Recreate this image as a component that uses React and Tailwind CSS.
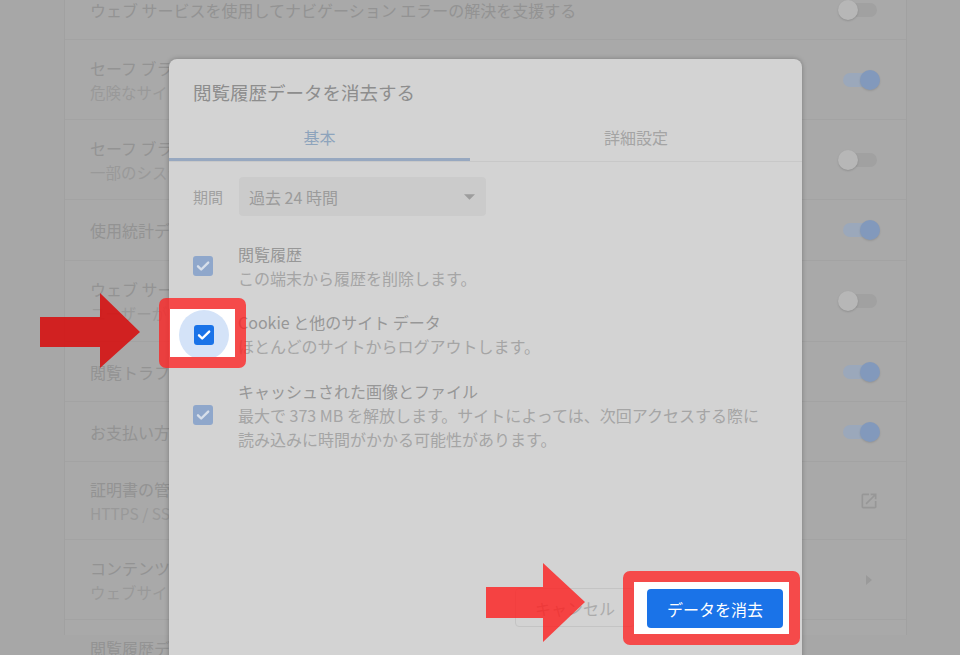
import React from "react";

const rows = [
  { h: "h-[60px]", t: "ウェブ サービスを使用してナビゲーション エラーの解決を支援する", r: "off" },
  { h: "h-[80px]", t: "セーフ ブラウジング（危険なサイトからの保護機能）", s: "危険なサイトからユーザーとデバイスを保護します", r: "on" },
  { h: "h-[80px]", t: "セーフ ブラウジングの機能向上に協力する", s: "一部のシステム情報とページのコンテンツを Google に送信します", r: "off" },
  { h: "h-[61px]", t: "使用統計データと障害レポートを Google に自動送信する", r: "on" },
  { h: "h-[81px]", t: "ウェブ サービスを使用してスペルミスを解決する", s: "ユーザーがブラウザに入力したテキストを Google に送信して、スペル チェックを強化します", r: "off" },
  { h: "h-[60px]", t: "閲覧トラフィックと一緒に「トラッキング拒否」リクエストを送信する", r: "on" },
  { h: "h-[60px]", t: "お支払い方法を保存しているかどうかをサイトで確認できるようにする", r: "on" },
  { h: "h-[78px]", t: "証明書の管理", s: "HTTPS / SSL の証明書と設定を管理します", r: "ext" },
  { h: "h-[80px]", t: "コンテンツの設定", s: "ウェブサイトで使用できる情報と、表示できるコンテンツを制御します", r: "arrow" },
  { h: "h-[80px]", t: "閲覧履歴データを消去する", s: "閲覧履歴、Cookie、キャッシュなどを削除します", r: "arrow" },
];

function Toggle({ on }) {
  return (
    <div className="relative w-[42px] h-[20px]">
      <div
        className={
          on
            ? "absolute left-[5px] right-[3px] top-[3px] h-[14px] rounded-full bg-[#9ba8bb]"
            : "absolute left-[5px] right-[3px] top-[3px] h-[14px] rounded-full bg-[#a1a1a1]"
        }
      />
      <div
        className={
          on
            ? "absolute right-0 top-0 w-5 h-5 rounded-full bg-[#8299bc] shadow-[0_1px_2px_rgba(0,0,0,0.12)]"
            : "absolute left-0 top-0 w-5 h-5 rounded-full bg-[#b7b7b7] shadow-[0_1px_2px_rgba(0,0,0,0.15)]"
        }
      />
    </div>
  );
}

function RightSlot({ r }) {
  if (r === "on") return <Toggle on />;
  if (r === "off") return <Toggle on={false} />;
  if (r === "ext")
    return (
      <div className="w-[42px] flex justify-end pr-[1px]">
        <svg viewBox="0 0 24 24" className="w-[20px] h-[20px]">
          <path
            d="M19 19H5V5h7V3H5a2 2 0 0 0-2 2v14a2 2 0 0 0 2 2h14c1.1 0 2-.9 2-2v-7h-2v7zM14 3v2h3.59l-9.83 9.83 1.41 1.41L19 6.41V10h2V3h-7z"
            fill="#979797"
          />
        </svg>
      </div>
    );
  return (
    <div className="w-[42px] flex justify-end pr-[8px]">
      <svg viewBox="0 0 6 10" className="w-[6px] h-[10px]">
        <polygon points="0,0 6,5 0,10" fill="#9a9a9a" />
      </svg>
    </div>
  );
}

function CheckSvg({ stroke }) {
  return (
    <svg viewBox="0 0 20 20" className="w-full h-full">
      <path
        d="M5 10.3l3.2 3.2L15.2 6.6"
        fill="none"
        stroke={stroke}
        strokeWidth="2.4"
        strokeLinecap="round"
        strokeLinejoin="round"
      />
    </svg>
  );
}

function FadedBox() {
  return (
    <div className="w-5 h-5 shrink-0 rounded-[3px] bg-[#8fa7cb]">
      <CheckSvg stroke="#d7dfea" />
    </div>
  );
}

export default function App() {
  return (
    <div className="relative w-[960px] h-[655px] overflow-hidden bg-[#a7a7a7] font-['Noto_Sans_CJK_JP','Noto_Sans',sans-serif]">
      {/* Background settings page */}
      <div className="ml-[64px] w-[843px] h-full bg-[#a9a9a9] border-x border-[#a1a1a1]">
        <div className="-mt-5 flex flex-col">
          {rows.map((row, i) => (
            <div
              key={i}
              className={`flex items-center pl-[25px] pr-[26px] border-b border-[#a3a3a3] ${row.h}`}
            >
              <div className="flex-1 min-w-0 overflow-hidden whitespace-nowrap">
                <div className="text-[16px] leading-[24px] text-[#939393]">{row.t}</div>
                {row.s && (
                  <div className="text-[15.5px] leading-[24px] text-[#999999]">{row.s}</div>
                )}
              </div>
              <RightSlot r={row.r} />
            </div>
          ))}
        </div>
      </div>

      {/* Dialog */}
      <div className="absolute left-[169px] top-[59px] w-[633px] h-[660px] rounded-[8px] bg-[#d3d3d3] shadow-[0_0_5px_rgba(0,0,0,0.28)] flex flex-col">
        <div className="px-6 pt-[21px] text-[18.5px] leading-[24px] text-[#8d8d8d] whitespace-nowrap">
          閲覧履歴データを消去する
        </div>
        <div className="mt-2 flex h-[50px] border-b border-[#c8c8c8]">
          <div className="relative w-[301px] flex items-center justify-center text-[16px] text-[#8ea4bc]">
            基本
            <div className="absolute left-0 right-0 bottom-0 h-[3px] bg-[#97a8c0]" />
          </div>
          <div className="flex-1 flex items-center justify-center text-[16px] text-[#a4a4a4]">
            詳細設定
          </div>
        </div>

        <div className="mt-[15px] flex items-center px-6">
          <div className="text-[15px] text-[#a0a0a0] leading-[24px]">期間</div>
          <div className="ml-4 w-[247px] h-[39px] rounded-[4px] bg-[#cbcbcb] flex items-center pl-[10px] pr-[11px]">
            <div className="flex-1 text-[16px] text-[#9b9b9b]">過去 24 時間</div>
            <svg viewBox="0 0 10 5" className="w-[11px] h-[6px]">
              <polygon points="0,0 10,0 5,5" fill="#9d9d9d" />
            </svg>
          </div>
        </div>

        <div className="mt-[26px] flex items-center pl-6">
          <FadedBox />
          <div className="ml-[25px] text-[16px] leading-[24px] whitespace-nowrap">
            <div className="text-[#979797]">閲覧履歴</div>
            <div className="text-[#a5a5a5]">この端末から履歴を削除します。</div>
          </div>
        </div>

        <div className="mt-5 flex items-center pl-6">
          <FadedBox />
          <div className="ml-[25px] text-[16px] leading-[24px] whitespace-nowrap">
            <div className="text-[#979797]">Cookie と他のサイト データ</div>
            <div className="text-[#a5a5a5]">ほとんどのサイトからログアウトします。</div>
          </div>
        </div>

        <div className="mt-[21px] flex items-center pl-6">
          <FadedBox />
          <div className="ml-[25px] text-[16px] leading-[24px] whitespace-nowrap">
            <div className="text-[#979797]">キャッシュされた画像とファイル</div>
            <div className="text-[#a5a5a5]">最大で 373 MB を解放します。サイトによっては、次回アクセスする際に</div>
            <div className="text-[#a5a5a5]">読み込みに時間がかかる可能性があります。</div>
          </div>
        </div>

        <div className="mt-[137px] flex justify-end gap-3 pr-[19px]">
          <div className="w-[120px] h-[39px] rounded-[4px] border border-[#c4c4c4] flex items-center justify-center text-[16px] text-[#ababab]">
            キャンセル
          </div>
          <div className="w-[136px] h-[39px] rounded-[4px] bg-[#8fa7cb] flex items-center justify-center text-[16px] text-[#d3d3d3]">
            データを消去
          </div>
        </div>
      </div>

      {/* Annotation: checkbox highlight */}
      <div className="absolute left-[159px] top-[298px] w-[87px] h-[70px] rounded-[7px] border-[11px] border-[rgba(255,30,30,0.76)] bg-clip-padding">
        <div className="relative w-full h-full bg-white overflow-hidden">
          <div className="absolute left-[9px] top-[1px] w-[50px] h-[50px] rounded-full bg-[#d4e3f8]" />
          <div className="absolute left-[24px] top-[16px] w-5 h-5 rounded-[3px] bg-[#1a73e8]">
            <CheckSvg stroke="#ffffff" />
          </div>
        </div>
      </div>

      {/* Annotation: clear button highlight */}
      <div className="absolute left-[623px] top-[571px] w-[177px] h-[74px] rounded-[7px] border-[11px] border-[rgba(255,30,30,0.76)] bg-clip-padding">
        <div className="w-full h-full bg-white pl-[13px] pt-[7px]">
          <div className="w-[136px] h-[39px] rounded-[4px] bg-[#1a73e8] flex items-center justify-center text-[16px] text-white">
            データを消去
          </div>
        </div>
      </div>

      {/* Annotation arrows */}
      <svg className="absolute left-[40px] top-[293px] w-[100px] h-[75px]" viewBox="0 0 100 75">
        <polygon points="0,24 60,24 60,0 100,39 60,75 60,54 0,54" fill="rgba(215,10,10,0.86)" />
      </svg>
      <svg className="absolute left-[486px] top-[563px] w-[99px] h-[79px]" viewBox="0 0 99 79">
        <polygon points="0,24 57,24 57,0 99,39 57,79 57,55 0,55" fill="rgba(255,25,25,0.78)" />
      </svg>
    </div>
  );
}
